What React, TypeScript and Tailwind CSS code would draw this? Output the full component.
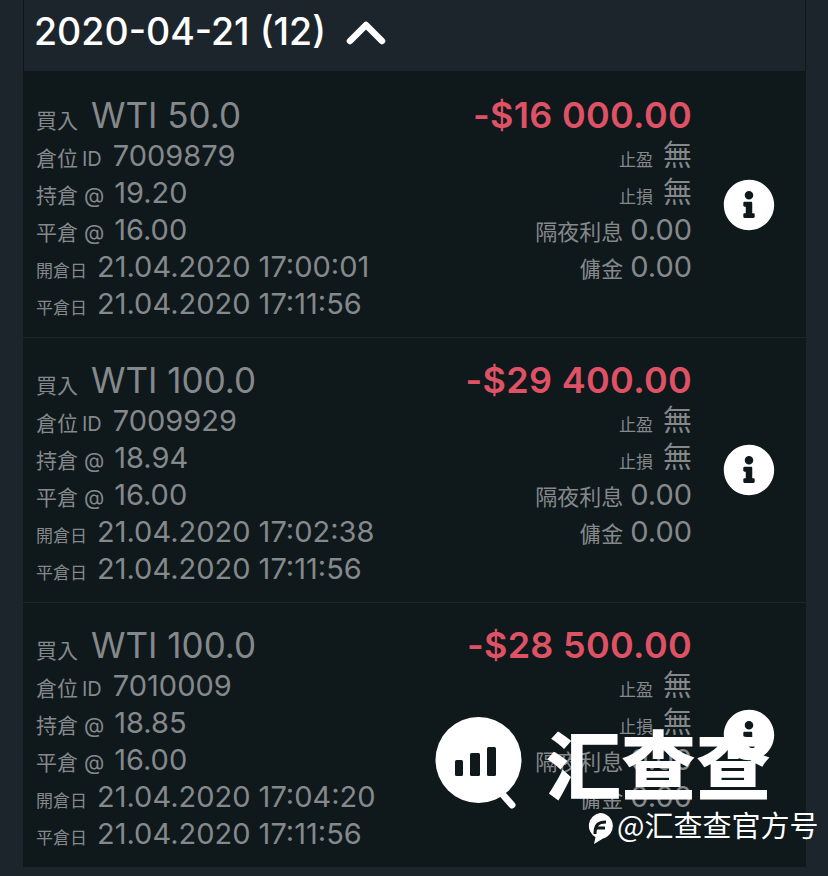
import { FaInfoCircle } from "react-icons/fa";

const font = "font-['Inter','Noto_Sans_CJK_TC',sans-serif]";

const trades = [
  { size: "WTI 50.0", pnl: "-$16 000.00", id: "7009879", open: "19.20", opened: "21.04.2020 17:00:01" },
  { size: "WTI 100.0", pnl: "-$29 400.00", id: "7009929", open: "18.94", opened: "21.04.2020 17:02:38" },
  { size: "WTI 100.0", pnl: "-$28 500.00", id: "7010009", open: "18.85", opened: "21.04.2020 17:04:20" },
];

function Line({ label, value, small, right }: { label: string; value: string; small?: boolean; right?: boolean }) {
  return (
    <div className={`flex h-[37px] items-baseline ${right ? "justify-end" : ""}`}>
      <span className={`${small ? "mr-2.5 text-[17px]" : right ? "mr-[7px] text-[22px]" : "mr-2.5 text-[21px]"} leading-[37px]`}>{label}</span>
      <span className="text-[29px] leading-[37px]">{value}</span>
    </div>
  );
}

function TradeRow({ trade }: { trade: (typeof trades)[number] }) {
  return (
    <div className="flex h-[265px] items-center whitespace-nowrap border-b border-[#1c252b] bg-[#0f181b] pl-[13px] pr-[31px] text-[#85898c]">
      <div className="flex-1 self-start pt-[20px]">
        <div className="flex h-[44px] items-baseline">
          <span className="mr-[13px] text-[21px] leading-[44px]">買入</span>
          <span className="text-[35px] leading-[44px]">{trade.size}</span>
        </div>
        <div className="flex h-[37px] items-baseline">
          <span className="mr-1 text-[21px] leading-[37px]">倉位</span>
          <span className="mr-[11px] text-[20px] leading-[37px]">ID</span>
          <span className="text-[29px] leading-[37px]">{trade.id}</span>
        </div>
        <Line label="持倉 @" value={trade.open} />
        <Line label="平倉 @" value="16.00" />
        <Line label="開倉日" value={trade.opened} small />
        <Line label="平倉日" value="21.04.2020 17:11:56" small />
      </div>
      <div className="w-[300px] self-start pt-[20px]">
        <div className="h-[44px] text-right text-[36px] font-semibold leading-[44px] tracking-[0.3px] text-[#df5266]">{trade.pnl}</div>
        <Line label="止盈" value="無" small right />
        <Line label="止損" value="無" small right />
        <Line label="隔夜利息" value="0.00" right />
        <Line label="傭金" value="0.00" right />
      </div>
      <FaInfoCircle className="ml-[31px] shrink-0 text-white" size={52} />
    </div>
  );
}

export default function App() {
  return (
    <div className={`relative h-[876px] w-[828px] overflow-hidden bg-[#1c252c] ${font}`}>
      <div className="ml-[23px] mr-[22px]">
        <div className="flex h-[73px] items-start gap-[20px] border-x border-b-2 border-[#10171c] bg-[#1c252c] pl-[10px] pt-[10px] text-white">
          <span className="text-[37.5px] font-medium leading-[44px]">2020-04-21 (12)</span>
          <svg width="40" height="26" viewBox="0 0 40 26" className="mt-[9px]" fill="none" stroke="currentColor" strokeWidth="6.5" strokeLinecap="round" strokeLinejoin="round">
            <path d="M4 22 L20 6 L36 22" />
          </svg>
        </div>
        {trades.map((t) => (
          <TradeRow key={t.id} trade={t} />
        ))}
      </div>

      {/* watermark */}
      <svg className="absolute left-[432px] top-[714px]" width="94" height="96" viewBox="0 0 94 96">
        <circle cx="46.5" cy="46" r="43" fill="#fff" />
        <path d="M72 82 L80 91" stroke="#fff" strokeWidth="7" strokeLinecap="round" />
        <rect x="23" y="46" width="8" height="16" rx="1.5" fill="#0f181b" />
        <rect x="38" y="39" width="10" height="23" rx="1.5" fill="#0f181b" />
        <rect x="55" y="33" width="9" height="29" rx="1.5" fill="#0f181b" />
      </svg>
      <div className="absolute left-[546px] top-[720px] font-['Noto_Sans_CJK_SC',sans-serif] text-[75px] font-black leading-[84px] text-white">汇查查</div>
      <svg className="absolute left-[586px] top-[812px]" width="28" height="33" viewBox="0 0 28 33">
        <path d="M14 1a13 13 0 0 1 3 25.6L8 32l1.5-6.8A13 13 0 0 1 14 1z" fill="#fff" />
        <path d="M9 22c0-9 3-12 11-12M10 16h9" stroke="#0f181b" strokeWidth="3" fill="none" />
      </svg>
      <div className="absolute left-[617px] top-[805px] whitespace-nowrap font-['Noto_Sans_CJK_SC',sans-serif] text-[29px] leading-[38px] text-white">@汇查查官方号</div>
    </div>
  );
}
